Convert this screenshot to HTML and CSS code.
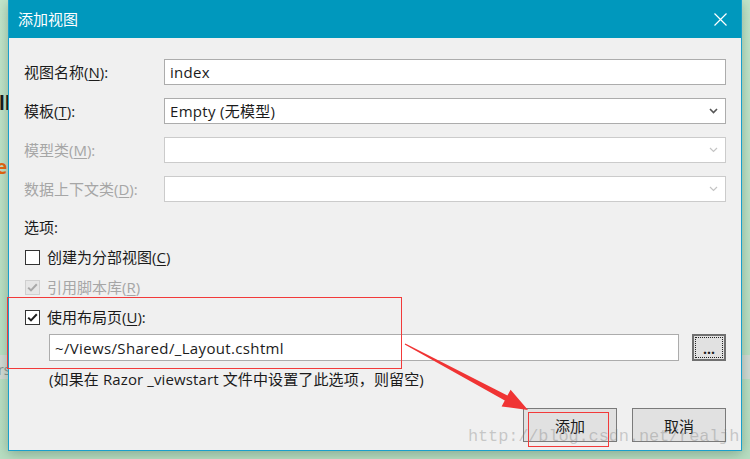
FILE: index.html
```html
<!DOCTYPE html>
<html lang="zh-CN">
<head>
<meta charset="utf-8">
<title>添加视图</title>
<link rel="stylesheet" href="styles.css">
</head>
<body>
<div class="desk">
  <div class="behind behind-ll">ll</div>
  <div class="behind behind-e">e</div>
  <div class="behind-band"></div>
  <div class="behind behind-rs">rs</div>

  <div class="dialog">
    <div class="titlebar">
      <span class="title">添加视图</span>
      <svg class="close" width="13" height="13" viewBox="0 0 13 13"><path d="M0.5 0.5 L12.5 12.5 M12.5 0.5 L0.5 12.5" stroke="#fff" stroke-width="1.2" fill="none"/></svg>
    </div>
    <div class="content">
      <div class="form">
        <label class="lbl">视图名称(<u>N</u>):</label>
        <div class="field"><span class="val">index</span></div>

        <label class="lbl">模板(<u>T</u>):</label>
        <div class="field select"><span class="val">Empty (无模型)</span>
          <svg class="chev" width="9" height="6" viewBox="0 0 9 6"><path d="M1 1 L4.5 4.5 L8 1" stroke="#555" stroke-width="1.6" fill="none"/></svg>
        </div>

        <label class="lbl disabled">模型类(<u>M</u>):</label>
        <div class="field select off">
          <svg class="chev" width="9" height="6" viewBox="0 0 9 6"><path d="M1 1 L4.5 4.5 L8 1" stroke="#c4c4c4" stroke-width="1.2" fill="none"/></svg>
        </div>

        <label class="lbl disabled">数据上下文类(<u>D</u>):</label>
        <div class="field select off">
          <svg class="chev" width="9" height="6" viewBox="0 0 9 6"><path d="M1 1 L4.5 4.5 L8 1" stroke="#c4c4c4" stroke-width="1.2" fill="none"/></svg>
        </div>
      </div>

      <div class="options">
        <div class="line">选项:</div>
        <div class="line check">
          <svg width="15" height="15" viewBox="0 0 15 15"><rect x="0.5" y="0.5" width="14" height="14" fill="#fff" stroke="#333"/></svg>
          <span>创建为分部视图(<u>C</u>)</span>
        </div>
        <div class="line check disabled">
          <svg width="15" height="15" viewBox="0 0 15 15"><rect x="0.5" y="0.5" width="14" height="14" fill="#e6e6e6" stroke="#cfcfcf"/><path d="M3.2 7.6 L6 10.4 L11.8 4.2" stroke="#a8a8a8" stroke-width="2" fill="none"/></svg>
          <span>引用脚本库(<u>R</u>)</span>
        </div>
        <div class="line check">
          <svg width="15" height="15" viewBox="0 0 15 15"><rect x="0.5" y="0.5" width="14" height="14" fill="#fff" stroke="#333"/><path d="M3.2 7.6 L6 10.4 L11.8 4.2" stroke="#1e1e1e" stroke-width="2" fill="none"/></svg>
          <span>使用布局页(<u>U</u>):</span>
        </div>
        <div class="layout-row">
          <div class="field layout"><span class="val wide">~/Views/Shared/_Layout.cshtml</span></div>
          <div class="browse"><span class="dots">...</span></div>
        </div>
        <div class="line help">(如果在 Razor _viewstart 文件中设置了此选项，则留空)</div>
      </div>

      <div class="actions">
        <div class="btn">添加</div>
        <div class="btn">取消</div>
      </div>
    </div>
  </div>

  <svg class="annot" width="750" height="459" viewBox="0 0 750 459">
    <rect x="7.5" y="297.5" width="394" height="71" fill="none" stroke="#f23a3a" stroke-width="1"/>
    <rect x="528.5" y="412.5" width="80" height="34" fill="none" stroke="#f23a3a" stroke-width="1"/>
    <polygon points="404.7,344.5 405.3,343.5 507.4,395.6 510.6,389.8 528,410 501.6,406.4 504.8,400.6" fill="#f03434"/>
  </svg>
  <div class="watermark">http://blog.csdn.net/realjh</div>
</div>
</body>
</html>
```
FILE: styles.css
```css
* { box-sizing: border-box; }
html, body { margin: 0; padding: 0; }
body {
  width: 750px;
  height: 459px;
  overflow: hidden;
  background: #bde2c7;
  font-family: "Open Sans", "Noto Sans CJK SC", sans-serif;
  font-size: 15px;
  color: #1b1b1b;
}
.desk {
  position: relative;
  width: 750px;
  height: 459px;
  padding-left: 8px;
  background: linear-gradient(180deg, #c2e6cb 0%, #b9dfc3 100%);
}
.behind {
  position: absolute;
  left: -1px;
  font-family: "Open Sans", sans-serif;
  font-weight: 700;
  line-height: 20px;
}
.behind-ll { top: 93px; font-size: 19px; color: #1a1a1a; }
.behind-e { top: 157px; font-size: 19px; color: #e8650e; left: -4px; }
.behind-band {
  position: absolute;
  left: 0;
  top: 355px;
  width: 750px;
  height: 24px;
  background: #d3dcd6;
}
.behind-rs { top: 360px; font-size: 14px; font-weight: 400; color: #8a9490; left: -2px; }

.dialog {
  position: relative;
  width: 734px;
  height: 451px;
  border: 1px solid #1a9fcb;
  border-top: none;
  background: #f0f0f0;
  display: flex;
  flex-direction: column;
  box-shadow: 0 3px 12px rgba(40, 70, 50, 0.35);
}
.titlebar {
  height: 38px;
  background: #0098bd;
  color: #fff;
  display: flex;
  align-items: center;
  justify-content: space-between;
  padding: 0 14px 0 9px;
  flex-shrink: 0;
}
.title {
  font-family: "Noto Sans CJK SC", sans-serif;
  font-size: 15px;
  line-height: 20px;
}
.close { display: block; }

.content {
  padding: 21px 15px 0 15px;
  display: flex;
  flex-direction: column;
}
.form {
  display: grid;
  grid-template-columns: 140px 1fr;
  grid-auto-rows: 26px;
  row-gap: 13px;
}
.lbl {
  display: flex;
  align-items: center;
  line-height: 20px;
  color: #1b1b1b;
  white-space: nowrap;
}
.lbl.disabled { color: #a6a6a6; }
u { text-underline-offset: 2px; }

.field {
  background: #fff;
  border: 1px solid #acacac;
  display: flex;
  align-items: center;
  padding-left: 5px;
  line-height: 20px;
}
.field.off { border-color: #cbcbcb; }
.select { padding-right: 7px; }
.chev { display: block; margin-left: auto; }
.val { white-space: nowrap; letter-spacing: 0.3px; }
.val.wide { letter-spacing: 0.35px; }

.options {
  margin-top: 15px;
  display: flex;
  flex-direction: column;
  row-gap: 10px;
}
.line {
  line-height: 20px;
  height: 20px;
  white-space: nowrap;
}
.check {
  display: flex;
  align-items: center;
  gap: 7px;
  padding-left: 1px;
}
.check svg { display: block; flex-shrink: 0; }
.check.disabled { color: #a6a6a6; }
.layout-row {
  display: flex;
  gap: 13px;
  margin-top: -3px;
  padding-left: 25px;
  height: 27px;
}
.layout { flex: 1; height: 27px; }
.browse {
  width: 34px;
  height: 27px;
  background: #e1e1e1;
  border: 2px solid #707070;
  position: relative;
  display: flex;
  align-items: flex-end;
  justify-content: center;
}
.browse::before {
  content: "";
  position: absolute;
  inset: 1px;
  border: 1px dotted #222;
}
.dots {
  font-size: 14px;
  line-height: 14px;
  font-weight: 700;
  letter-spacing: 0;
  margin-bottom: 3px;
}
.help { padding-left: 25px; margin-top: -2px; letter-spacing: 0.12px; }

.actions {
  display: flex;
  justify-content: flex-end;
  gap: 15px;
  margin-top: 19px;
}
.btn {
  width: 94px;
  height: 34px;
  background: #e1e1e1;
  border: 1px solid #7a7a7a;
  display: flex;
  align-items: center;
  justify-content: center;
  font-family: "Noto Sans CJK SC", sans-serif;
  font-size: 15px;
}

.annot {
  position: absolute;
  left: 0;
  top: 0;
  pointer-events: none;
}
.watermark {
  position: absolute;
  left: 468px;
  top: 427px;
  font-family: "Liberation Mono", monospace;
  font-size: 17px;
  line-height: 20px;
  letter-spacing: -0.15px;
  color: rgba(120, 120, 120, 0.35);
  pointer-events: none;
}
```
